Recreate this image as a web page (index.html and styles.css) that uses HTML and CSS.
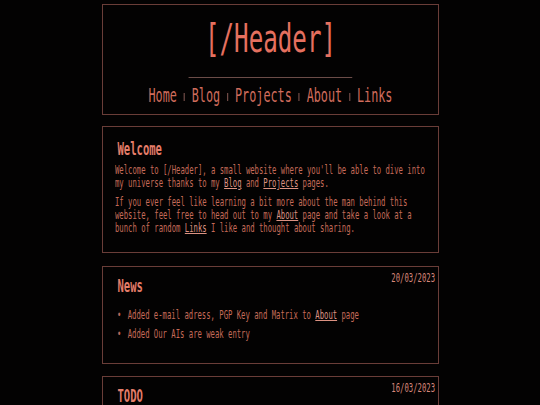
FILE: index.html
```html
<!DOCTYPE html>
<html lang="en">
<head>
<meta charset="utf-8">
<title>[/Header]</title>
<link rel="stylesheet" href="styles.css">
</head>
<body>
<main class="page">
  <header class="card head">
    <div class="sq">
      <h1 class="title">[/Header]</h1>
      <hr class="rule">
      <nav class="nav">
        <a href="#">Home</a><span class="sep"></span><a href="#">Blog</a><span class="sep"></span><a href="#">Projects</a><span class="sep"></span><a href="#">About</a><span class="sep"></span><a href="#">Links</a>
      </nav>
    </div>
  </header>

  <section class="card welcome">
    <div class="sq">
      <h2 class="heading">Welcome</h2>
      <p class="text">Welcome to [/Header], a small website where you'll be able to dive into my universe thanks to my <a href="#">Blog</a> and <a href="#">Projects</a> pages.</p>
      <p class="text">If you ever feel like learning a bit more about the man behind this website, feel free to head out to my <a href="#">About</a> page and take a look at a bunch of random <a href="#">Links</a> I like and thought about sharing.</p>
    </div>
  </section>

  <section class="card news">
    <div class="sq">
      <div class="row">
        <h2 class="heading">News</h2>
        <span class="date">20/03/2023</span>
      </div>
      <ul class="list">
        <li>Added e-mail adress, PGP Key and Matrix to <a href="#">About</a> page</li>
        <li>Added Our AIs are weak entry</li>
      </ul>
    </div>
  </section>

  <section class="card news">
    <div class="sq">
      <div class="row">
        <h2 class="heading">TODO</h2>
        <span class="date">16/03/2023</span>
      </div>
      <ul class="list">
        <li>Write a new blog post</li>
        <li>Clean up the projects page</li>
      </ul>
    </div>
  </section>
</main>
</body>
</html>
```

FILE: styles.css
```css
:root {
  --s: 0.62;
  --border: #6a3d38;
}

* {
  box-sizing: border-box;
}

html, body {
  margin: 0;
  padding: 0;
  background: #030202;
}

body {
  font-family: "DejaVu Sans Mono", "Liberation Mono", monospace;
  color: #c46a58;
  overflow: hidden;
}

.page {
  width: 337px;
  margin: 4px auto 0;
  display: flex;
  flex-direction: column;
  gap: 12px;
}

.card {
  border: 1px solid var(--border);
  overflow: hidden;
}

/* condensed text: content laid out wide, then squeezed horizontally */
.sq {
  width: calc(100% / var(--s));
  transform: scaleX(var(--s));
  transform-origin: 0 0;
}

.head {
  padding: 12px 0 8px;
  margin-bottom: -1px;
}

.title {
  margin: 0;
  font-size: 39px;
  line-height: 44px;
  font-weight: normal;
  text-align: center;
  color: #e5705f;
}

.rule {
  width: calc(164px / var(--s));
  margin: 16px auto 0;
  border: 0;
  border-top: 1px solid #6b4c48;
  height: 0;
}

.nav {
  margin-top: 6px;
  font-size: 19px;
  line-height: 22px;
  text-align: center;
  white-space: nowrap;
}

.nav a {
  color: #d06c5c;
  text-decoration: none;
}

.sep {
  display: inline-block;
  width: 2px;
  height: 8px;
  margin: 0 11px;
  vertical-align: 1px;
  background: #6e4a45;
}

.welcome {
  padding: 12px 3px 17px 12px;
  margin-bottom: 1px;
}

.news {
  padding: 5px 3px 16px 12px;
}

.row {
  display: flex;
  justify-content: space-between;
  align-items: flex-start;
}

.heading {
  margin: 0;
  padding-left: calc(2.5px / var(--s));
  font-size: 17px;
  line-height: 20px;
  font-weight: bold;
  color: #e57d69;
}

.news .heading {
  margin-top: 4px;
}

.date {
  font-size: 11.7px;
  line-height: 13px;
  color: #d8867a;
}

.text {
  margin: 5px 0 0;
  padding-right: calc(5px / var(--s));
  font-size: 11.7px;
  line-height: 13px;
}

.text + .text {
  margin-top: 6px;
}

.text a,
.list a {
  color: #dc9282;
  text-decoration: underline;
}

.list {
  list-style: none;
  margin: 13px 0 0;
  padding: 0 0 0 calc(12.7px / var(--s));
  font-size: 11.7px;
  line-height: 13px;
}

.list li {
  margin-bottom: 6px;
}

.list li::before {
  content: "•";
  display: inline-block;
  width: calc(10.7px / var(--s));
  margin-left: calc(-10.7px / var(--s));
  color: #b8665a;
}
```
